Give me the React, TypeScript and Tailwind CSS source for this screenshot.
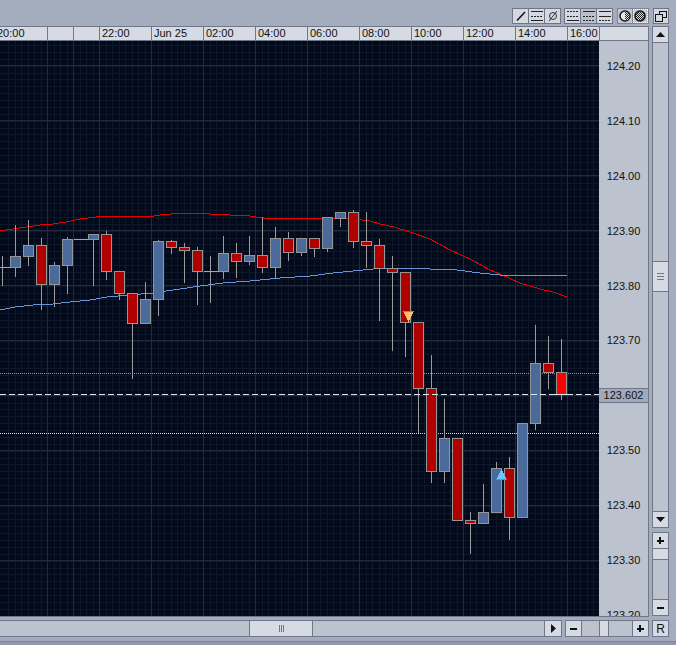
import type { ReactNode } from 'react';

// [center x, wick top, wick bottom, body top, body bottom, kind]
type Bar = [number, number, number, number, number, 'r' | 'b' | 'R' | 'd'];

const bars: Bar[] = [
  [2.5, 256, 286, 267, 267, 'd'],
  [15.5, 225, 277, 256, 267, 'b'],
  [28.5, 220, 266, 245, 256, 'b'],
  [41.5, 238, 310, 245, 284, 'r'],
  [54.5, 262, 307, 265, 284, 'b'],
  [67.5, 237, 294, 239, 265, 'b'],
  [80.5, 239, 239, 239, 239, 'd'],
  [93.5, 234, 286, 234, 239, 'b'],
  [106.5, 231, 280, 234, 271, 'r'],
  [119.5, 271, 300, 271, 293, 'r'],
  [132.5, 293, 379, 293, 323, 'r'],
  [145.5, 282, 323, 299, 323, 'b'],
  [158.5, 240, 316, 241, 299, 'b'],
  [171.5, 240, 254, 241, 247, 'r'],
  [184.5, 243, 283, 247, 250, 'r'],
  [197.5, 247, 305, 250, 271, 'r'],
  [210.5, 256, 303, 271, 271, 'd'],
  [223.5, 236, 279, 253, 271, 'b'],
  [236.5, 243, 278, 253, 261, 'r'],
  [249.5, 236, 265, 255, 261, 'b'],
  [262.5, 217, 273, 255, 267, 'r'],
  [275.5, 227, 278, 238, 267, 'b'],
  [288.5, 232, 261, 238, 252, 'r'],
  [301.5, 238, 256, 238, 252, 'b'],
  [314.5, 238, 257, 238, 248, 'r'],
  [327.5, 217, 252, 217, 248, 'b'],
  [340.5, 212, 227, 212, 218, 'b'],
  [353.5, 210, 248, 212, 241, 'r'],
  [366.5, 212, 268, 241, 245, 'r'],
  [379.5, 239, 321, 245, 268, 'r'],
  [392.5, 256, 351, 268, 272, 'r'],
  [405.5, 272, 357, 272, 322, 'r'],
  [418.5, 322, 433, 322, 388, 'r'],
  [431.5, 355, 483, 388, 471, 'r'],
  [444.5, 399, 483, 438, 471, 'b'],
  [457.5, 438, 520, 438, 520, 'r'],
  [470.5, 512, 554, 520, 523, 'r'],
  [483.5, 484, 523, 512, 523, 'b'],
  [496.5, 462, 512, 468, 512, 'b'],
  [509.5, 457, 540, 468, 517, 'r'],
  [522.5, 423, 517, 423, 517, 'b'],
  [535.5, 325, 430, 363, 423, 'b'],
  [548.5, 336, 389, 363, 372, 'r'],
  [561.5, 339, 400, 372, 394, 'R'],
];

const redLine =
  '0,231 13,229 26,227 40,225 53,224 66,222 80,219 96,217 106,216 154,216 160,215 171,214 200,213 210,214 250,216 262,218 340,218 353,219 370,221 380,224 394,227 410,232 430,239 450,250 472,260 490,270 500,274 520,283 540,289 553,292 567,297';
const blueLine =
  '0,310 15,307 33,305 53,304 70,302 90,300 107,297 130,295 153,293 180,289 200,286 223,283 250,281 280,278 310,276 333,273 353,271 373,269 400,268 430,269 457,270 480,273 510,276 537,275 567,275';

const minorX = Array.from({ length: 93 }, (_, i) => Math.round(8 + i * 6.5) + 0.5);
const minorY = Array.from({ length: 86 }, (_, i) => Math.round(45 + i * 6.875) + 0.5);
const majorX = [47, 73, 99, 151, 203, 255, 307, 359, 411, 463, 515, 567];
const majorY = [66, 121, 176, 231, 286, 341, 396, 451, 506, 561];

const ticks = [
  { label: '20:00', w: 'w-[48px]' },
  { label: '', w: 'w-[26px]' },
  { label: '', w: 'w-[26px]' },
  { label: '22:00', w: 'w-[52px]' },
  { label: 'Jun 25', w: 'w-[52px]' },
  { label: '02:00', w: 'w-[52px]' },
  { label: '04:00', w: 'w-[52px]' },
  { label: '06:00', w: 'w-[52px]' },
  { label: '08:00', w: 'w-[52px]' },
  { label: '10:00', w: 'w-[52px]' },
  { label: '12:00', w: 'w-[52px]' },
  { label: '14:00', w: 'w-[52px]' },
  { label: '16:00', w: 'w-[32px]' },
];

// the 123.60 row sits under the current price marker
const prices = ['124.20', '124.10', '124.00', '123.90', '123.80', '123.70', '', '123.50', '123.40', '123.30', '123.20'];

function ToolButton({ children, active }: { children: ReactNode; active?: boolean }) {
  return (
    <div
      className={`w-[17px] h-[16px] -ml-px first:ml-0 border border-[#6f7688] flex items-center justify-center ${
        active ? 'bg-[#b9bfcb]' : 'bg-[#d4d8e1]'
      }`}
    >
      {children}
    </div>
  );
}

function Lines({ dashes }: { dashes: boolean[] }) {
  return (
    <svg width="12" height="12" viewBox="0 0 12 12" shapeRendering="crispEdges">
      {dashes.map((d, i) => (
        <line
          key={i}
          x1="0"
          x2="12"
          y1={1.5 + i * 4.5}
          y2={1.5 + i * 4.5}
          stroke="#222"
          strokeDasharray={d ? '2 1' : undefined}
        />
      ))}
    </svg>
  );
}

function Ball({ id, half }: { id: string; half?: boolean }) {
  return (
    <svg width="12" height="12" viewBox="0 0 12 12">
      <defs>
        <pattern id={id} width="2" height="2" patternUnits="userSpaceOnUse">
          <rect width="2" height="2" fill="#ddd" />
          <rect width="1" height="1" fill="#222" />
          <rect x="1" y="1" width="1" height="1" fill="#222" />
        </pattern>
      </defs>
      <circle cx="6" cy="6" r="5" fill={half ? '#e8e8e8' : `url(#${id})`} stroke="#111" strokeWidth="1.500" />
      {half && <path d="M6 1.500a4.500 4.500 0 0 1 0 9z" fill={`url(#${id})`} />}
    </svg>
  );
}

function SideButton({ children, className = '' }: { children: ReactNode; className?: string }) {
  return (
    <div className={`w-[17px] h-[17px] shrink-0 border border-[#6f7688] bg-[#d6dae3] flex items-center justify-center ${className}`}>
      {children}
    </div>
  );
}

function Arrow({ rotate }: { rotate: string }) {
  return (
    <svg width="9" height="9" viewBox="0 0 9 9" className={rotate}>
      <path d="M4.500 2 9 7H0z" fill="#111" />
    </svg>
  );
}

function Plus() {
  return (
    <svg width="9" height="9" viewBox="0 0 9 9" shapeRendering="crispEdges">
      <path d="M3 1h2v2.500h3v2H5V8H3V5.500H1v-2h2z" fill="#111" />
    </svg>
  );
}

function Minus() {
  return <div className="w-[7px] h-[2px] bg-[#111]" />;
}

function Chart() {
  return (
    <svg width="599" height="575" viewBox="0 41 599 575" className="block shrink-0 bg-[#030a1c]">
      <g shapeRendering="crispEdges">
        {minorX.map((x) => (
          <line key={x} x1={x} x2={x} y1="41" y2="616" stroke="#0f1829" />
        ))}
        {minorY.map((y) => (
          <line key={y} x1="0" x2="599" y1={y} y2={y} stroke="#0f1829" />
        ))}
        {majorX.map((x) => (
          <line key={x} x1={x + 0.5} x2={x + 0.5} y1="41" y2="616" stroke="#232b3b" />
        ))}
        {majorY.map((y) => (
          <line key={y} x1="0" x2="599" y1={y - 0.5} y2={y - 0.5} stroke="#232b3b" />
        ))}
        <line x1="0" x2="599" y1="373.5" y2="373.5" stroke="#9a9a9a" strokeDasharray="1 1" />
        <line x1="0" x2="599" y1="433.5" y2="433.5" stroke="#ffff00" strokeDasharray="1 1" />
        <polyline points={redLine} fill="none" stroke="#e80000" />
        <polyline points={blueLine} fill="none" stroke="#6a93dc" />
        {bars.map(([x, t, b, bt, bb, kind]) => (
          <g key={x}>
            {t !== b && <line x1={x} x2={x} y1={t} y2={b} stroke="#9c9c9c" />}
            {kind === 'd' ? (
              <line x1={x - 7} x2={x + 8} y1={bt + 0.5} y2={bt + 0.5} stroke="#a8a8a8" />
            ) : (
              <rect
                x={x - 5}
                y={bt + 0.5}
                width="10"
                height={bb - bt}
                fill={kind === 'r' ? '#b00000' : kind === 'R' ? '#ff0000' : '#4a6a9c'}
                stroke="#959595"
              />
            )}
          </g>
        ))}
        <line x1="0" x2="599" y1="394.5" y2="394.5" stroke="#dfe7f5" strokeDasharray="6 3" />
        <line x1="551" x2="572" y1="394.5" y2="394.5" stroke="#dfe7f5" />
        <path d="M403 311.500h11" stroke="#8a8a8a" />
        <path d="M403.500 312h10l-5 10z" fill="#ffc266" />
        <path d="M496 479.500h11" stroke="#8a8a8a" />
        <path d="M496.500 479l5-10 5 10z" fill="#66c8ff" />
      </g>
    </svg>
  );
}

export default function App() {
  return (
    <div className="w-[676px] h-[645px] overflow-hidden bg-[#a4adbd] flex flex-col font-['Liberation_Sans',sans-serif] text-[11px] text-[#111]">
      {/* toolbar */}
      <div className="h-[26px] shrink-0 flex justify-end items-start pt-[8px] pr-[7px]">
        <div className="flex">
          <ToolButton>
            <svg width="12" height="12" viewBox="0 0 12 12">
              <path d="M2 10.500 10 2" stroke="#111" strokeWidth="1.500" />
            </svg>
          </ToolButton>
          <ToolButton>
            <Lines dashes={[false, true, false]} />
          </ToolButton>
          <ToolButton>
            <svg width="12" height="12" viewBox="0 0 12 12" fill="none" stroke="#333">
              <circle cx="6" cy="6" r="3.500" />
              <path d="M2 11 10 1" />
            </svg>
          </ToolButton>
        </div>
        <div className="flex ml-[3px]">
          <ToolButton>
            <Lines dashes={[true, true, false]} />
          </ToolButton>
          <ToolButton active>
            <Lines dashes={[false, true, true]} />
          </ToolButton>
          <ToolButton>
            <Lines dashes={[false, false, true]} />
          </ToolButton>
        </div>
        <div className="flex ml-[4px] bg-[#7d8598] border border-[#7d8598] gap-px w-[32px] h-[16px]">
          <div className="flex-1 bg-[#c3c8d3] flex items-center justify-center">
            <Ball id="hatch-a" half />
          </div>
          <div className="flex-1 bg-[#c3c8d3] border border-dotted border-white flex items-center justify-center">
            <Ball id="hatch-b" />
          </div>
        </div>
        <div className="ml-[4px] w-[16px] h-[16px] border border-[#6f7688] bg-[#d4d8e1] flex items-center justify-center">
          <svg width="12" height="12" viewBox="0 0 12 12" fill="none" stroke="#111" strokeWidth="1.200" shapeRendering="crispEdges">
            <rect x="4.500" y="1.500" width="7" height="6" />
            <rect x="0.500" y="4.500" width="7" height="7" fill="#d4d8e1" />
          </svg>
        </div>
      </div>

      {/* chart + side controls */}
      <div className="flex h-[591px] shrink-0">
        <div className="w-[649px] shrink-0 flex flex-col border-r border-[#6f7688]">
          <div className="flex h-[15px] shrink-0 border-y border-[#6f7688] bg-[#d6dae3]">
            {ticks.map((t, i) => (
              <div
                key={i}
                className={`${t.w} shrink-0 h-full border-r border-[#6f7688] overflow-hidden leading-[13px] pl-[2px] whitespace-nowrap`}
              >
                {i === 0 ? <span className="block -ml-[5px]">{t.label}</span> : t.label}
              </div>
            ))}
          </div>
          <div className="flex h-[576px] border-b border-[#6f7688]">
            <Chart />
            <div className="relative flex-1 bg-[#bcc3cf] overflow-hidden text-center pt-[18px]">
              {prices.map((p, i) => (
                <div key={i} className="h-[54.9px] leading-[14px]">
                  {p}
                </div>
              ))}
              <div className="absolute left-0 right-0 top-[347px] h-[15px] bg-[#a0aabd] border-y border-[#6f7688] leading-[13px]">
                123.602
              </div>
            </div>
          </div>
        </div>

        <div className="ml-[3px] w-[17px] shrink-0 flex flex-col pt-px">
          <div className="h-[502px] shrink-0 flex flex-col border border-[#6f7688] -mt-px mb-[4px] bg-[#bcc3cf]">
            <div className="h-[16px] shrink-0 bg-[#d6dae3] border-b border-[#6f7688] flex items-center justify-center">
              <Arrow rotate="" />
            </div>
            <div className="h-[218px] shrink-0" />
            <div className="h-[31px] shrink-0 bg-[#d6dae3] border-y border-[#6f7688] flex flex-col items-center justify-center gap-[2px]">
              <div className="w-[7px] h-px bg-[#6f7688]" />
              <div className="w-[7px] h-px bg-[#6f7688]" />
              <div className="w-[7px] h-px bg-[#6f7688]" />
            </div>
            <div className="flex-1" />
            <div className="h-[16px] shrink-0 bg-[#d6dae3] border-t border-[#6f7688] flex items-center justify-center">
              <Arrow rotate="rotate-180" />
            </div>
          </div>
          <div className="h-[84px] shrink-0 flex flex-col border border-[#6f7688] bg-[#bcc3cf]">
            <div className="h-[16px] shrink-0 bg-[#d6dae3] border-b border-[#6f7688] flex items-center justify-center">
              <Plus />
            </div>
            <div className="h-[11px] shrink-0 bg-[#d6dae3] border-b border-[#6f7688]" />
            <div className="flex-1" />
            <div className="h-[16px] shrink-0 bg-[#d6dae3] border-t border-[#6f7688] flex items-center justify-center">
              <Minus />
            </div>
          </div>
        </div>
      </div>

      {/* bottom scroll row */}
      <div className="flex h-[17px] shrink-0 mt-[3px]">
        <div className="w-[562px] shrink-0 flex border-y border-r border-[#6f7688] bg-[#bcc3cf]">
          <div className="w-[249px] shrink-0" />
          <div className="w-[64px] shrink-0 bg-[#d6dae3] border-x border-[#6f7688] flex items-center justify-center gap-[1px]">
            <div className="w-px h-[7px] bg-[#6f7688]" />
            <div className="w-px h-[7px] bg-[#6f7688]" />
            <div className="w-px h-[7px] bg-[#6f7688]" />
          </div>
          <div className="flex-1" />
          <div className="w-[17px] shrink-0 bg-[#d6dae3] border-l border-[#6f7688] flex items-center justify-center">
            <Arrow rotate="rotate-90" />
          </div>
        </div>
        <div className="ml-[3px] w-[84px] shrink-0 flex border border-[#6f7688] bg-[#bcc3cf]">
          <div className="w-[16px] shrink-0 bg-[#d6dae3] border-r border-[#6f7688] flex items-center justify-center">
            <Minus />
          </div>
          <div className="w-[17px] shrink-0" />
          <div className="w-[10px] shrink-0 bg-[#d6dae3] border-x border-[#6f7688]" />
          <div className="flex-1" />
          <div className="w-[16px] shrink-0 bg-[#d6dae3] border-l border-[#6f7688] flex items-center justify-center">
            <Plus />
          </div>
        </div>
        <SideButton className="ml-[3px] text-[12px]">R</SideButton>
      </div>
      <div className="mt-[4px] flex-1 border-t border-[#7e8799] bg-[#909aac]" />
    </div>
  );
}
